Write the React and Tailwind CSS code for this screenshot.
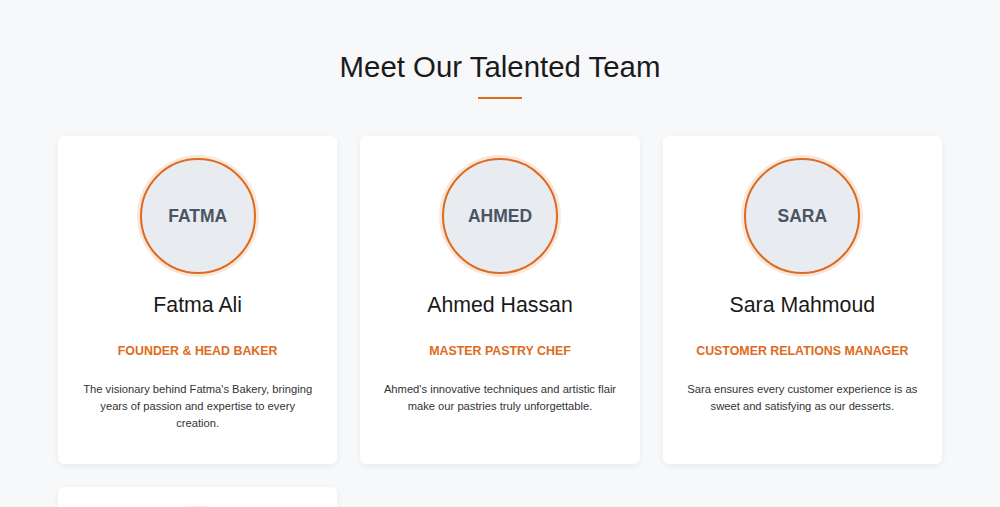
import React from 'react';

const team = [
  {
    initials: "FATMA",
    name: "Fatma Ali",
    role: "Founder & Head Baker",
    bio: "The visionary behind Fatma's Bakery, bringing years of passion and expertise to every creation.",
  },
  {
    initials: "AHMED",
    name: "Ahmed Hassan",
    role: "Master Pastry Chef",
    bio: "Ahmed's innovative techniques and artistic flair make our pastries truly unforgettable.",
  },
  {
    initials: "SARA",
    name: "Sara Mahmoud",
    role: "Customer Relations Manager",
    bio: "Sara ensures every customer experience is as sweet and satisfying as our desserts.",
  },
  {
    initials: "OMAR",
    name: "Omar Youssef",
    role: "Head of Operations",
    bio: "Omar keeps everything running smoothly so every order arrives fresh and on time.",
  },
];

const App = () => {
  return (
    <div className="min-h-screen bg-[#f7f8fa] font-['Liberation_Sans',Arial,sans-serif] pt-[48px] pb-10">
      <h2 className="text-center text-[29.4px] leading-[38px] text-[#1a1a1a]">Meet Our Talented Team</h2>
      <div className="w-[44px] h-[2px] bg-[#dd6b20] mx-auto mt-[11px]"></div>

      <div className="w-[884px] mx-auto mt-[37px] grid grid-cols-3 gap-[23px]">
        {team.map((m, i) => (
          <div
            key={i}
            className="bg-white rounded-md shadow-[0_2px_6px_rgba(0,0,0,0.06)] px-[22px] pt-[22px] pb-8 flex flex-col items-center text-center"
          >
            <div className="w-[116px] h-[116px] rounded-full bg-[#e8ebef] border-2 border-[#dd6b20] shadow-[0_0_0_3px_rgba(221,107,32,0.16)] flex items-center justify-center">
              <span className="text-[17.5px] leading-[22px] font-bold text-[#4a5563] -mt-[1px]">{m.initials}</span>
            </div>
            <h3 className="mt-[17px] text-[21.3px] leading-[28px] text-[#1a1a1a]">{m.name}</h3>
            <p className="mt-[24px] text-[12.4px] leading-[16px] font-bold uppercase text-[#dd6b20]">{m.role}</p>
            <p className="mt-[22px] text-[11.2px] leading-[17px] text-[#333]">{m.bio}</p>
          </div>
        ))}
      </div>
    </div>
  );
};

export default App;
